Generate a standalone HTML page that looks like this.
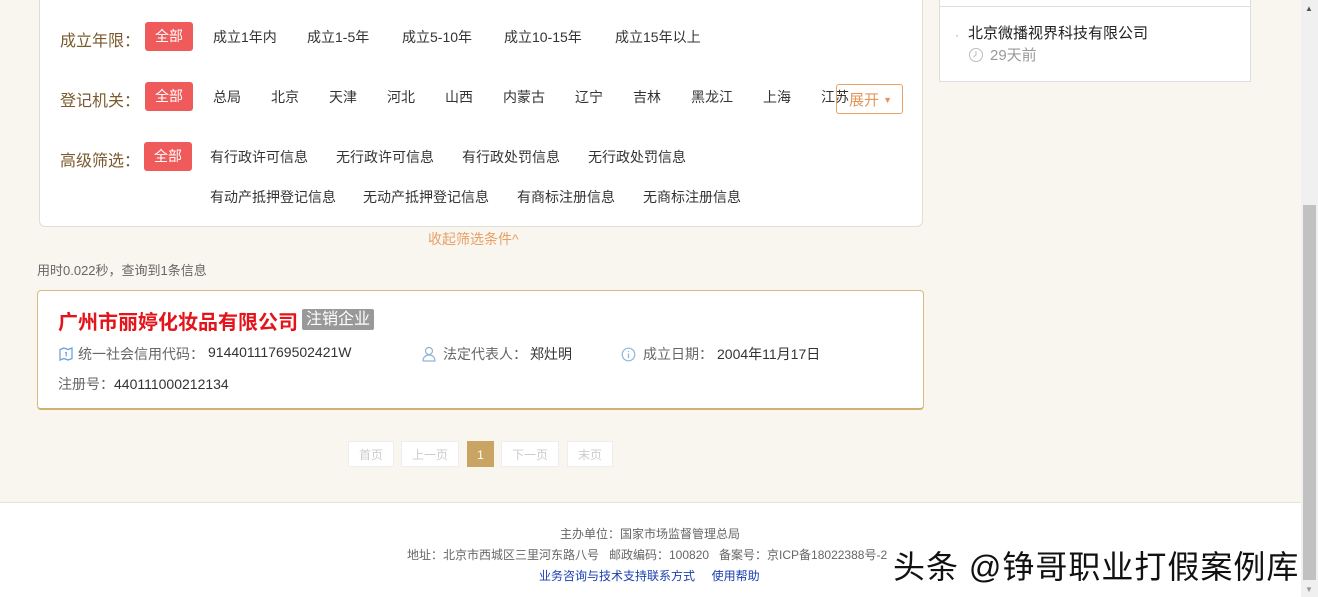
<!DOCTYPE html>
<html><head><meta charset="utf-8"><style>
*{margin:0;padding:0;box-sizing:border-box}
body{width:1318px;height:597px;overflow:hidden;background:#f9f6ef;font-family:"Liberation Sans","Noto Sans CJK SC",sans-serif;position:relative;color:#333}
.a{position:absolute;white-space:nowrap}
.filter{position:absolute;left:39px;top:-5px;width:884px;height:232px;background:#fff;border:1px solid #e2ddd2;border-top:none;border-radius:0 0 6px 6px}
.lab{font-size:16px;color:#7a5a2e}
.all{background:#ef5b5b;color:#fff;font-size:14px;width:48px;height:29px;line-height:29px;text-align:center;border-radius:3px}
.it{font-size:14px;color:#333}
.side{position:absolute;left:939px;top:-2px;width:312px;height:84px;background:#fff;border:1px solid #ddd}
.card{position:absolute;left:37px;top:290px;width:887px;height:120px;background:#fff;border:1px solid #d6bd82;border-bottom:2px solid #cfb173;border-radius:4px}
.pg{position:absolute;top:441px;height:26px;line-height:26px;font-size:12px;color:#ccc;background:#fff;border:1px solid #eee;text-align:center}
.foot{position:absolute;left:0;top:502px;width:1301px;height:95px;background:#fff;border-top:1px solid #e8e2d6}
.f{font-size:12px;color:#666}
</style></head><body>
<div class="filter"></div>
<div class="a lab" style="left:60px;top:27px">成立年限：</div>
<div class="a all" style="left:145px;top:22px">全部</div>
<div class="a it" style="left:213px;top:27px">成立1年内</div>
<div class="a it" style="left:307px;top:27px">成立1-5年</div>
<div class="a it" style="left:402px;top:27px">成立5-10年</div>
<div class="a it" style="left:504px;top:27px">成立10-15年</div>
<div class="a it" style="left:615px;top:27px">成立15年以上</div>

<div class="a lab" style="left:60px;top:87px">登记机关：</div>
<div class="a all" style="left:145px;top:82px">全部</div>
<div class="a it" style="left:213px;top:87px">总局</div>
<div class="a it" style="left:271px;top:87px">北京</div>
<div class="a it" style="left:329px;top:87px">天津</div>
<div class="a it" style="left:387px;top:87px">河北</div>
<div class="a it" style="left:445px;top:87px">山西</div>
<div class="a it" style="left:503px;top:87px">内蒙古</div>
<div class="a it" style="left:575px;top:87px">辽宁</div>
<div class="a it" style="left:633px;top:87px">吉林</div>
<div class="a it" style="left:691px;top:87px">黑龙江</div>
<div class="a it" style="left:763px;top:87px">上海</div>
<div class="a it" style="left:821px;top:87px">江苏</div>
<div class="a" style="left:836px;top:84px;width:67px;height:30px;border:1px solid #e8a066;border-radius:3px;color:#e8955a;font-size:15px;line-height:30px;padding-left:12px">展开 <span style="font-size:9px;vertical-align:2px">▼</span></div>

<div class="a lab" style="left:60px;top:147px">高级筛选：</div>
<div class="a all" style="left:144px;top:142px">全部</div>
<div class="a it" style="left:210px;top:147px">有行政许可信息</div>
<div class="a it" style="left:336px;top:147px">无行政许可信息</div>
<div class="a it" style="left:462px;top:147px">有行政处罚信息</div>
<div class="a it" style="left:588px;top:147px">无行政处罚信息</div>
<div class="a it" style="left:210px;top:187px">有动产抵押登记信息</div>
<div class="a it" style="left:363px;top:187px">无动产抵押登记信息</div>
<div class="a it" style="left:517px;top:187px">有商标注册信息</div>
<div class="a it" style="left:643px;top:187px">无商标注册信息</div>

<div class="a" style="left:428px;top:229px;font-size:14px;color:#e8a066">收起筛选条件^</div>

<div class="side"><div style="border-top:1px solid #ddd;margin-top:7px"></div></div>
<div class="a" style="left:955px;top:28px;font-size:12px;color:#999">·</div>
<div class="a" style="left:968px;top:22px;font-size:15px;color:#222">北京微播视界科技有限公司</div>
<svg class="a" style="left:968px;top:47px" width="16" height="16" viewBox="0 0 16 16"><circle cx="8" cy="8" r="6.5" fill="none" stroke="#bbb"/><path d="M8 4v4l-2.5 2" fill="none" stroke="#bbb"/></svg>
<div class="a" style="left:990px;top:44px;font-size:15px;color:#999">29天前</div>

<div class="a" style="left:37px;top:260px;font-size:13px;color:#666">用时0.022秒，查询到1条信息</div>

<div class="card"></div>
<div class="a" style="left:58px;top:306px;font-size:20px;font-weight:bold;color:#e4141b">广州市丽婷化妆品有限公司</div>
<div class="a" style="left:302px;top:309px;height:21px;line-height:21px;padding:0 4px;background:#999;color:#fff;font-size:16px;border-radius:2px">注销企业</div>
<svg class="a" style="left:59px;top:347px" width="14" height="14" viewBox="0 0 14 14"><path d="M1 2.5L5 1l4 1.5L13 1v10.5l-4 1.5-4-1.5-4 1.5z" fill="none" stroke="#6ba4d8" stroke-width="1.3"/><path d="M6 5.5h1.2v4" fill="none" stroke="#6ba4d8" stroke-width="1.2"/></svg>
<div class="a" style="left:78px;top:344px;font-size:14px;color:#666">统一社会信用代码：</div>
<div class="a" style="left:208px;top:344px;font-size:14px;color:#333">91440111769502421W</div>
<svg class="a" style="left:421px;top:346px" width="16" height="16" viewBox="0 0 16 16"><circle cx="8" cy="5" r="3.5" fill="none" stroke="#8fb5d8" stroke-width="1.2"/><path d="M2 15c0-4 3-6 6-6s6 2 6 6z" fill="none" stroke="#8fb5d8" stroke-width="1.2"/></svg>
<div class="a" style="left:443px;top:344px;font-size:14px;color:#666">法定代表人：</div>
<div class="a" style="left:530px;top:344px;font-size:14px;color:#333">郑灶明</div>
<svg class="a" style="left:621px;top:347px" width="15" height="15" viewBox="0 0 15 15"><circle cx="7.5" cy="7.5" r="6.3" fill="none" stroke="#8fb5d8" stroke-width="1.2"/><path d="M7.5 6.5v4.5M7.5 4v1" stroke="#8fb5d8" stroke-width="1.3"/></svg>
<div class="a" style="left:643px;top:344px;font-size:14px;color:#666">成立日期：</div>
<div class="a" style="left:717px;top:344px;font-size:14px;color:#333">2004年11月17日</div>
<div class="a" style="left:58px;top:374px;font-size:14px;color:#666">注册号：<span style="color:#333">440111000212134</span></div>

<div class="pg" style="left:348px;width:46px">首页</div>
<div class="pg" style="left:401px;width:58px">上一页</div>
<div class="pg" style="left:467px;width:27px;background:#c9a463;color:#fff;border-color:#c9a463">1</div>
<div class="pg" style="left:501px;width:58px">下一页</div>
<div class="pg" style="left:567px;width:46px">末页</div>

<div class="foot"></div>
<div class="a f" style="left:560px;top:525px">主办单位：国家市场监督管理总局</div>
<div class="a f" style="left:407px;top:546px">地址：北京市西城区三里河东路八号&nbsp;&nbsp;&nbsp;邮政编码：100820&nbsp;&nbsp;&nbsp;备案号：京ICP备18022388号-2</div>
<div class="a f" style="left:539px;top:567px;color:#1a3fb0">业务咨询与技术支持联系方式&nbsp;&nbsp;&nbsp;&nbsp;&nbsp;使用帮助</div>
<div class="a" style="left:893px;top:542px;font-size:32px;letter-spacing:1px;color:#111;text-shadow:0 0 2px #fff,1px 1px 0 #fff">头条 @铮哥职业打假案例库</div>

<div class="a" style="left:1301px;top:0;width:17px;height:597px;background:#f0f0f0"></div>
<div class="a" style="left:1303px;top:205px;width:13px;height:375px;background:#c1c1c1"></div>
<div class="a" style="left:1305px;top:4px;font-size:8px;color:#555">▲</div>
<div class="a" style="left:1305px;top:585px;font-size:8px;color:#999">▼</div>
</body></html>
